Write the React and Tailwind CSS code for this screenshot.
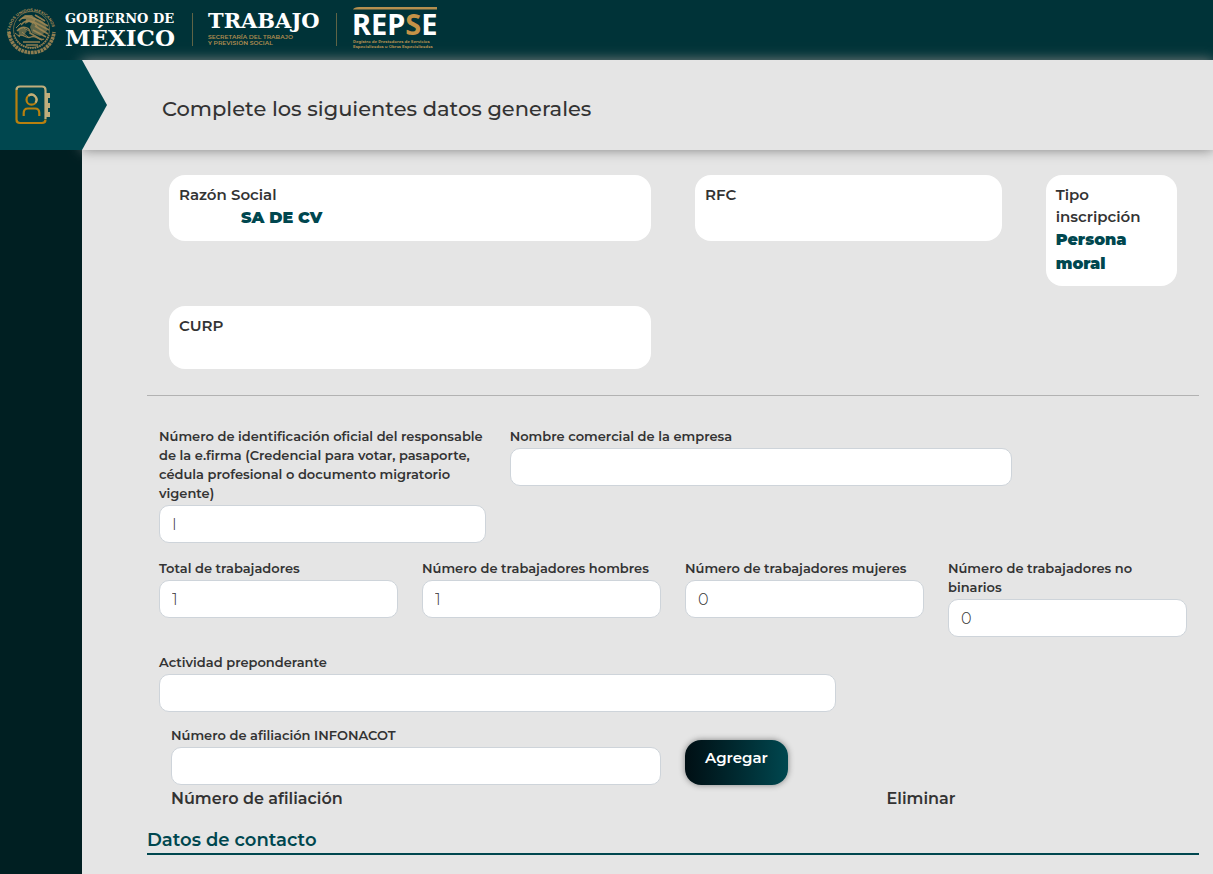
import { useState } from "react";

const GobiernoLogo = () => (
  <svg width="440" height="60" viewBox="0 0 440 60" role="img" aria-label="Gobierno de México">
    <defs>
      <path id="escudo-arco" d="M 10.4 37 A 21.5 21.5 0 1 1 52.6 37" />
    </defs>
    {/* Escudo nacional */}
    <g fill="none" stroke="#8f7d50">
      <circle cx="31.5" cy="29.500" r="18" strokeWidth="0.7" />
      <path d="M9 32 C10 44 19 52.500 31.500 52.500 C44 52.500 53 44 54 32" strokeWidth="3.6" strokeDasharray="2.6 0.7" />
      <path d="M14 35 C17 44 24 48 32 48 C39 48 46 44 49 35" strokeWidth="1.8" strokeDasharray="1.6 0.8" />
      <path d="M19 21 C24 15 31 16 34 19 M21 25 C26 18 35 21 37 27 M17 31 C23 24 31 28 30 34" strokeWidth="1.4" />
      <path d="M35 15 L45 21 M34 18 L48 26 M34 22 L49 30 M35 26 L48 34 M33 30 L46 37 M30 33 L42 40" strokeWidth="1.6" />
      <path d="M18 36 C23 32 26 40 31 37 S39 42 44 39 M23 42 H40 M26 45 H38" strokeWidth="1.4" />
      <path d="M16 28 L21 23 M15 33 L20 37 M22 32 L28 37 M24 28 L29 31" strokeWidth="1" />
    </g>
    <g fill="#a08a55">
      <path d="M20 19 L25 15 L32 15 L36 19 L33 24 L29 22 L25 24 L26 19 Z" opacity="0.8" />
      <path d="M34 19 C42 18 47 24 47 31 L40 36 L32 33 L30 27 Z" opacity="0.6" />
      <path d="M18 29 L24 27 L27 31 L24 35 L19 34 Z" opacity="0.6" />
    </g>
    <text fill="#a58a55" fontSize="4" fontWeight="700" fontFamily="Montserrat, Inter, sans-serif">
      <textPath href="#escudo-arco" startOffset="1">ESTADOS UNIDOS MEXICANOS</textPath>
    </text>

    <g fill="#fff" fontFamily="'DejaVu Serif', serif" fontWeight="700">
      <text x="65" y="23" fontSize="13">GOBIERNO DE</text>
      <text x="65" y="46" fontSize="23">MÉXICO</text>
      <text x="208" y="28" fontSize="21">TRABAJO</text>
    </g>
    <path d="M192.5 13 V46 M336.5 13 V46" stroke="#5f6446" />
    <g fill="#b08d50" fontFamily="Montserrat, Inter, sans-serif" fontWeight="600">
      <text x="208" y="39" fontSize="6">SECRETARÍA DEL TRABAJO</text>
      <text x="208" y="45" fontSize="6">Y PREVISIÓN SOCIAL</text>
    </g>
    <g fill="#b08d50" fontFamily="Montserrat, Inter, sans-serif" fontWeight="700">
      <text x="353" y="43" fontSize="4">Registro de Prestadores de Servicios</text>
      <text x="353" y="48" fontSize="4">Especializados u Obras Especializadas</text>
    </g>
    <path d="M353 9.5 Q354 7 359 7 H437 V9.5 Z" fill="#b48f4f" />
    <text x="352" y="35" fontSize="29" fontWeight="700" fontFamily="'Noto Sans', sans-serif" fill="#fff">
      REP<tspan fill="#c49247">S</tspan>E
    </text>
  </svg>
);

const ContactIcon = () => (
  <svg width="38" height="42" viewBox="0 0 38 42" fill="none" strokeWidth="2.2" aria-hidden="true">
    <path d="M2.500 6 V35.500 Q2.500 39 6 39 H28 Q31.500 39 31.500 35.500" stroke="#b8800f" />
    <path d="M2.500 6 Q2.500 2.500 6 2.500 H28 Q31.500 2.500 31.500 6 V35" stroke="#bfae7c" />
    <path d="M32 9 H36 V14 H34 V19 H36 V24 H34 V28 H36 V33 H32 Z" fill="#bfae7c" />
    <circle cx="17.5" cy="15.7" r="5" stroke="#b8800f" />
    <path d="M14.500 11.700 A5 5 0 0 1 21.500 18.700" stroke="#bfae7c" />
    <path d="M9.700 32 V29 Q9.700 24.500 14 24.500 H21 Q25.300 24.500 25.300 29 V32" stroke="#b8800f" />
  </svg>
);

const DataCard = ({ label, value, className }) => (
  <dl className={`mx-[22px] self-start rounded-2xl bg-white px-2.5 pt-[9px] ${className}`}>
    <dt className="text-[15px] leading-[22px] font-semibold">{label}</dt>
    <dd className="text-base leading-6 font-black text-[#00474f]">{value}</dd>
  </dl>
);

const Field = ({ id, label, value, onChange, className }) => (
  <div className={`px-3 ${className}`}>
    <label htmlFor={id} className="mb-0.5 block text-[13px] leading-[19px] font-semibold">
      {label}
    </label>
    <input
      id={id}
      type="text"
      value={value}
      onChange={onChange}
      className="block h-[38px] w-full rounded-[10px] border border-[#ced4da] bg-white px-3 text-base font-light outline-none focus:border-[#00474f]"
    />
  </div>
);

const App = () => {
  const [form, setForm] = useState({
    identificacion: "I",
    nombreComercial: "",
    total: "1",
    hombres: "1",
    mujeres: "0",
    noBinarios: "0",
    actividad: "",
    infonacot: "",
  });

  const bind = (name) => ({
    id: name,
    value: form[name],
    onChange: (e) => setForm({ ...form, [name]: e.target.value }),
  });

  return (
    <div className="flex min-h-screen flex-col bg-[#e5e5e5] font-['Montserrat','Inter',sans-serif] text-[#333]">
      <header className="h-[60px] bg-[#003338]">
        <GobiernoLogo />
      </header>

      <div className="flex flex-1">
        {/* Sidebar */}
        <aside className="w-[82px] shrink-0 bg-[#001f22]">
          <a
            href="#datos-generales"
            aria-label="Datos generales"
            className="relative z-20 flex h-[90px] w-[107px] items-center bg-[#00474f] pl-3.5 [clip-path:polygon(0_0,82px_0,100%_50%,82px_100%,0_100%)]"
          >
            <ContactIcon />
          </a>
        </aside>

        <main className="min-w-0 flex-1">
          <div className="relative z-10 flex h-[90px] items-center bg-[#e5e5e5] pt-2 pl-20 shadow-[0_0_12px_gray]">
            <h1 className="text-[21px] leading-8 font-medium">Complete los siguientes datos generales</h1>
          </div>

          <form id="datos-generales" className="pt-[25px] pr-3.5 pl-[65px]" onSubmit={(e) => e.preventDefault()}>
            {/* Registered data */}
            <div className="grid grid-cols-12 gap-y-5">
              <DataCard
                label="Razón Social"
                value={<span className="pl-[62px]">SA DE CV</span>}
                className="col-span-6 min-h-[66px]"
              />
              <DataCard label="RFC" className="col-span-4 min-h-[66px]" />
              <DataCard label="Tipo inscripción" value="Persona moral" className="col-span-2 min-h-[111px]" />
              <DataCard label="CURP" className="col-span-6 min-h-[63px]" />
            </div>

            <hr className="mt-[26px] mb-[31px] border-[#b2b2b2]" />

            <div className="grid grid-cols-12 gap-y-4">
              <Field
                {...bind("identificacion")}
                label="Número de identificación oficial del responsable de la e.firma (Credencial para votar, pasaporte, cédula profesional o documento migratorio vigente)"
                className="col-span-4"
              />
              <Field {...bind("nombreComercial")} label="Nombre comercial de la empresa" className="col-span-6" />
              <Field {...bind("total")} label="Total de trabajadores" className="col-span-3 col-start-1" />
              <Field {...bind("hombres")} label="Número de trabajadores hombres" className="col-span-3" />
              <Field {...bind("mujeres")} label="Número de trabajadores mujeres" className="col-span-3" />
              <Field {...bind("noBinarios")} label="Número de trabajadores no binarios" className="col-span-3" />
              <Field {...bind("actividad")} label="Actividad preponderante" className="col-span-8" />
            </div>

            <div className="mt-3.5 px-3">
              <div className="flex items-end">
                <Field {...bind("infonacot")} label="Número de afiliación INFONACOT" className="w-1/2" />
                <button
                  type="button"
                  className="mx-3 h-[45px] rounded-2xl bg-linear-to-r from-[#000f14] to-[#00474f] px-5 pb-2 text-[15px] font-semibold text-white shadow-[0_0_6px_gray]"
                >
                  Agregar
                </button>
              </div>
              <table className="mt-0.5 w-full table-fixed text-left text-base leading-6">
                <thead>
                  <tr>
                    <th className="px-3 font-semibold">Número de afiliación</th>
                    <th className="w-[30%] px-2 font-semibold">Eliminar</th>
                  </tr>
                </thead>
              </table>
            </div>

            <h2 className="mt-4 border-b-2 border-[#00474f] text-lg leading-[26px] font-semibold text-[#00474f]">
              Datos de contacto
            </h2>
          </form>
        </main>
      </div>
    </div>
  );
};

export default App;
